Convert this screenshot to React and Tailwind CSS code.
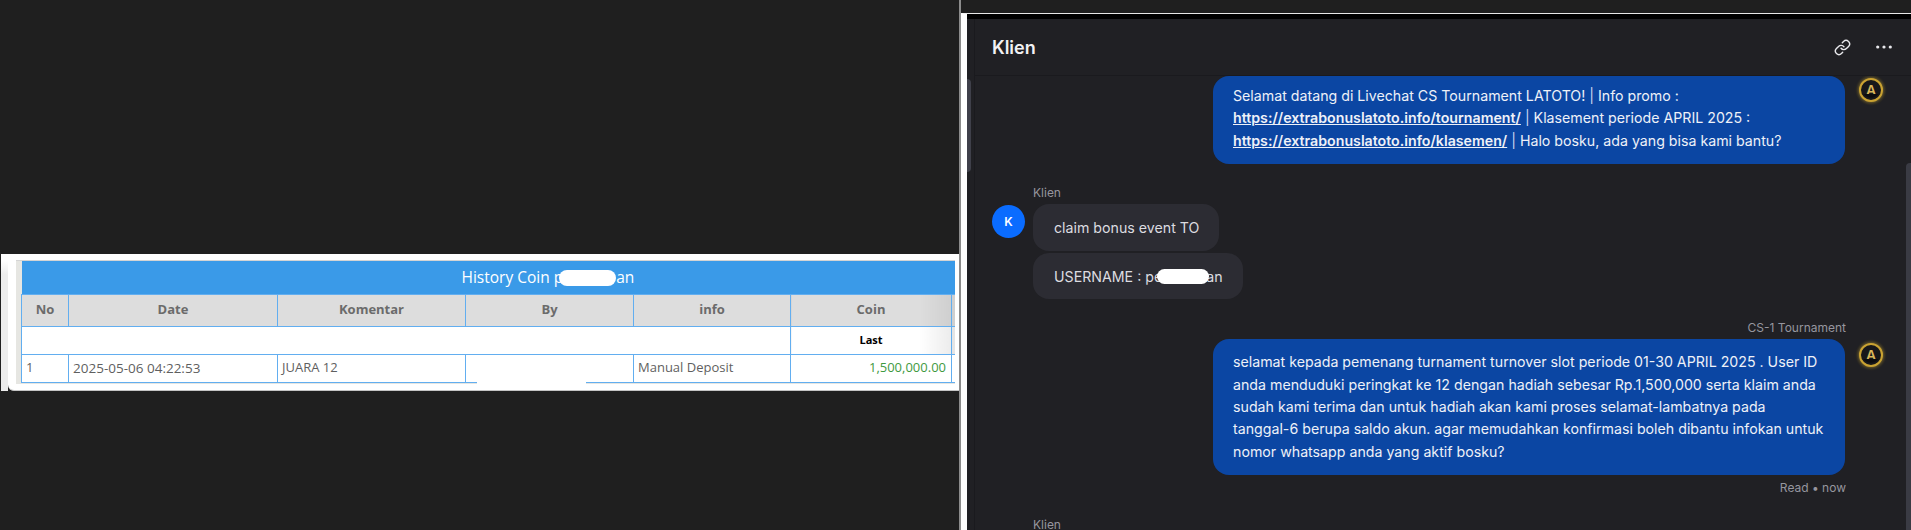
import React from "react";
import { Link } from "lucide-react";

const Th = ({ children, className = "" }) => (
  <th className={`border border-[#62aef0] bg-[#dddddd] text-center font-bold text-[13px] text-[#6b6b6b] ${className}`}>{children}</th>
);
const Td = ({ children, className = "" }) => (
  <td className={`border border-[#62aef0] px-[4px] text-[13px] text-[#5f5f5f] ${className}`}>{children}</td>
);

function HistoryTable() {
  return (
    <div className="flex h-[137px] w-[958px] ml-px">
      <div className="w-[7px] bg-linear-to-b from-white from-5% to-[#ececec] to-15%" />
      <div className="flex-1 bg-white rounded-bl-md pt-[6px] pl-[8px] pr-[4px] relative border-b border-[#c4c4c4]">
        <div className="bg-[#e6e6e2] border-t border-[#d4d4d4] pl-[5px] h-[124px]">
          <table className="table-fixed w-[933px] border-collapse font-['Open_Sans',sans-serif]">
            <colgroup>
              <col className="w-[47px]" />
              <col className="w-[209px]" />
              <col className="w-[188px]" />
              <col className="w-[168px]" />
              <col className="w-[157px]" />
              <col className="w-[161px]" />
              <col className="w-[3px]" />
            </colgroup>
            <tbody>
              <tr className="h-[33px]">
                <td colSpan={7} className="bg-[#3a9ae8] text-left pl-[440px] text-[15.5px] text-white border-b border-[#62aef0]">
                  History Coin p<span className="inline-block w-[57px] h-[16px] bg-white rounded-lg align-middle -ml-[4px]" />an
                </td>
              </tr>
              <tr className="h-[32px]">
                <Th>No</Th>
                <Th>Date</Th>
                <Th>Komentar</Th>
                <Th>By</Th>
                <Th>info</Th>
                <Th className="bg-linear-to-r from-[#dddddd] from-80% to-[#cfcfcf]">Coin</Th>
                <td className="bg-[#cfcfcf] border-y border-[#62aef0]" />
              </tr>
              <tr className="h-[28px]">
                <td colSpan={5} className="bg-white border border-[#62aef0]" />
                <td className="border border-[#62aef0] text-center text-[11px] font-bold text-black bg-linear-to-r from-white from-80% to-[#ececec]">Last</td>
                <td className="bg-[#e4e4e4] border-y border-[#62aef0]" />
              </tr>
              <tr className="h-[28px] bg-white">
                <Td>1</Td>
                <Td className="!text-[13.5px]">2025-05-06 04:22:53</Td>
                <Td>JUARA 12</Td>
                <Td></Td>
                <Td>Manual Deposit</Td>
                <Td className="text-right !text-[#3f9a3f] !pr-[5px] !pl-0">1,500,000.00</Td>
                <td className="border-y border-[#62aef0]" />
              </tr>
            </tbody>
          </table>
        </div>
        <span className="absolute left-[469px] top-[126px] w-[109px] h-[4px] bg-white" />
      </div>
    </div>
  );
}

function AgentAvatar({ className = "", id }) {
  return (
    <svg width="32" height="32" viewBox="0 0 32 32" className={`shrink-0 ${className}`}>
      <defs>
        <radialGradient id={id} cx="50%" cy="50%" r="50%">
          <stop offset="62%" stopColor="#a88c34" />
          <stop offset="100%" stopColor="#25231c" stopOpacity="0.1" />
        </radialGradient>
      </defs>
      <circle cx="16" cy="16" r="16" fill={`url(#${id})`} />
      <circle cx="16" cy="16" r="11" fill="#17171a" stroke="#c9a232" strokeWidth="2" />
      <text x="16" y="21" textAnchor="middle" fontSize="14" fontWeight="700" fontFamily="'Liberation Sans', sans-serif" fill="#d9b65a">A</text>
      <path d="M8.5 20h15a9.5 9.5 0 0 1-15 0z" fill="#0c0c0e" />
    </svg>
  );
}

const Sep = () => <span className="text-[#c9d6f0]">|</span>;
const A = ({ children }) => <span className="font-semibold underline">{children}</span>;

function AgentBubble({ children, className = "", avatarId, avatarClass = "" }) {
  return (
    <div className="flex justify-end gap-[10px]">
      <div className={`w-[632px] bg-[#0b46a3] rounded-[16px] px-[20px] text-[14.2px] leading-[22.4px] text-[#eef1f8] ${className}`}>
        {children}
      </div>
      <AgentAvatar id={avatarId} className={avatarClass} />
    </div>
  );
}

function ChatPanel() {
  return (
    <div className="flex-1 border-l-2 border-[#8c8c8c] pt-[13px] min-w-0 h-[530px]">
      <div className="h-[517px] border-t border-[#e8e8e8] border-l-[6px] border-l-white flex flex-col overflow-hidden font-['Inter',sans-serif]">
        <div className="h-[5px] bg-black shrink-0" />
        <div className="flex-1 flex bg-[#202024] min-h-0 relative">
          <div className="w-[8px] border-r border-[#1a1a1e] shrink-0 pt-[60px]">
            <div className="w-[4px] h-[93px] bg-[#3f404a] rounded-r-sm" />
          </div>
          <div className="flex-1 min-w-0 flex flex-col">
            <header className="h-[57px] shrink-0 flex items-center justify-between pl-[17px] pr-[18px] border-b border-[#1a1a1e]">
              <h1 className="text-[18px] font-semibold text-[#f2f2f4]">Klien</h1>
              <div className="flex items-center gap-[24px] text-[#e8e8ec]">
                <Link size={17} strokeWidth={2} />
                <svg width="18" height="18" viewBox="0 0 18 18" fill="currentColor">
                  <circle cx="2.7" cy="9" r="1.6" />
                  <circle cx="9" cy="9" r="1.6" />
                  <circle cx="15.3" cy="9" r="1.6" />
                </svg>
              </div>
            </header>
            <div className="flex-1 min-h-0 overflow-hidden pr-[24px]">
              <AgentBubble avatarId="glow-a" avatarClass="-mt-[2px] h-[32px]" className="pt-[9px] pb-[12px]">
                Selamat datang di Livechat CS Tournament LATOTO! <Sep /> Info promo : <A>https://extrabonuslatoto.info/tournament/</A> <Sep /> Klasement periode APRIL 2025 : <A>https://extrabonuslatoto.info/klasemen/</A> <Sep /> Halo bosku, ada yang bisa kami bantu?
              </AgentBubble>

              <div className="flex gap-[8px] pl-[17px] mt-[21px]">
                <div className="w-[33px] h-[33px] mt-[20px] shrink-0 rounded-full bg-[#0a6cff] flex items-center justify-center text-[12px] font-semibold text-white">K</div>
                <div className="flex flex-col items-start">
                  <div className="text-[12px] leading-[16px] text-[#96969f] mb-[3px]">Klien</div>
                  <div className="h-[47px] flex items-center pl-[21px] pr-[20px] bg-[#2c2c33] rounded-[16px] text-[14.2px] text-[#dcdce0]">claim bonus event TO</div>
                  <div className="h-[46px] mt-[2px] flex items-center pl-[21px] pr-[20px] bg-[#2c2c33] rounded-[16px] text-[14.2px] text-[#dcdce0]">
                    <span>USERNAME : pe</span>
                    <span className="relative w-[52px] h-[15px] -ml-[5px] -mr-[3px] bg-white rounded-lg" />
                    <span>an</span>
                  </div>
                </div>
              </div>

              <div className="mt-[21px] mr-[41px] text-right text-[12px] leading-[16px] text-[#96969f] mb-[3px]">CS-1 Tournament</div>
              <AgentBubble avatarId="glow-b" className="py-[12px]">
                selamat kepada pemenang turnament turnover slot periode 01-30 APRIL 2025 . User ID anda menduduki peringkat ke 12 dengan hadiah sebesar Rp.1,500,000 serta klaim anda sudah kami terima dan untuk hadiah akan kami proses selamat-lambatnya pada <span className="whitespace-nowrap">tanggal-6</span> berupa saldo akun. agar memudahkan konfirmasi boleh dibantu infokan untuk nomor whatsapp anda yang aktif bosku?
              </AgentBubble>
              <div className="mt-[5px] mr-[41px] text-right text-[12px] leading-[16px] text-[#96969f]">Read • now</div>

              <div className="mt-[21px] pl-[58px] text-[12px] leading-[16px] text-[#96969f]">Klien</div>
            </div>
          </div>
          <div className="absolute right-0 top-[144px] bottom-0 w-[5px] bg-[#3a3b44] rounded-tl-sm" />
        </div>
      </div>
    </div>
  );
}

export default function App() {
  return (
    <div className="w-[1911px] h-[530px] flex bg-[#1f1f1f] overflow-hidden">
      <div className="w-[959px] shrink-0 pt-[254px]">
        <HistoryTable />
      </div>
      <ChatPanel />
    </div>
  );
}
